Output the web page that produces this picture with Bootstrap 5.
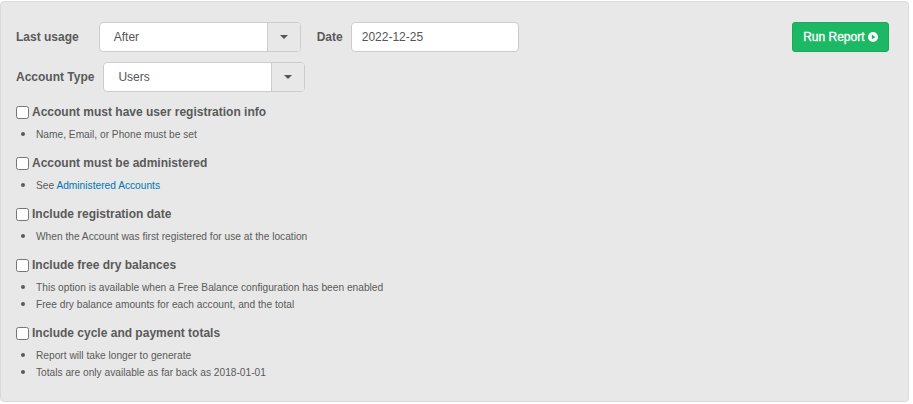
<!DOCTYPE html>
<html lang="en">
<head>
<meta charset="UTF-8" />
<meta name="viewport" content="width=device-width, initial-scale=1" />
<title>Report Options</title>
<link href="https://cdn.jsdelivr.net/npm/bootstrap@5.3.0/dist/css/bootstrap.min.css" rel="stylesheet" />
<style>
  body {
    background-color: #fff;
    font-family: "Liberation Sans", Arial, sans-serif;
    color: #555;
    padding: 1px 4px 0 0;
  }
  .report-panel {
    height: 401px;
    background-color: #e8e8e8;
    border: 1px solid #dadada;
    border-radius: 4px;
    padding: 20px 19px 0 15px;
  }
  .field-label {
    font-size: 12px;
    font-weight: 700;
    color: #5a5a5a;
    margin: 0;
  }
  .combo {
    display: flex;
    width: 202px;
    height: 30px;
    background: #fff;
    border: 1px solid #ccc;
    border-radius: 4px;
    font-size: 12px;
    color: #555;
  }
  .combo-a { margin-left: 20px; }
  .combo-b { margin-left: 9px; }
  .combo-value {
    flex-grow: 1;
    padding-left: 14px;
    line-height: 28px;
  }
  .combo-arrow {
    width: 33px;
    background: #e8e8e8;
    border-left: 1px solid #ccc;
    border-radius: 0 3px 3px 0;
    display: flex;
    align-items: center;
    justify-content: center;
  }
  .combo-arrow::after {
    content: "";
    border-top: 4px solid #555;
    border-left: 4px solid transparent;
    border-right: 4px solid transparent;
  }
  .date-label { margin: 0 8px 0 16px; }
  .type-row { margin: 10px 0 13px; }
  .date-box {
    width: 168px;
    height: 30px;
    font-size: 12px;
    color: #555;
    padding: 0 10px;
    border: 1px solid #ccc;
    border-radius: 4px;
  }
  .run-btn {
    width: 97px;
    height: 30px;
    padding: 0;
    font-size: 12px;
    color: #fff;
    -webkit-text-stroke: .3px #fff;
    background-color: #1cb864;
    border: 1px solid #18a95a;
    border-radius: 3px;
  }
  .run-btn:hover { color: #fff; background-color: #18a95a; }
  .run-btn svg { vertical-align: -1px; }
  .opt-check {
    width: 13px;
    height: 13px;
    margin: 0 3px 0 0;
    flex-shrink: 0;
    appearance: none;
    background: #fff;
    border: 1px solid #767676;
    border-radius: 2.5px;
  }
  .opt-title {
    font-size: 12px;
    font-weight: 700;
    line-height: 14px;
    color: #5a5a5a;
  }
  .opt-notes {
    font-size: 10.2px;
    line-height: 17px;
    color: #5a5a5a;
    margin: 6px 0 0;
    padding-left: 20px;
  }
  .opt-notes li { height: 17px; }
  .opt-notes li::marker { font-size: 14px; }
  .opt-notes a { color: #0077b3; text-decoration: none; }
  .opt-group { margin-bottom: 14px; }
</style>
</head>
<body>
  <div class="report-panel">
    <div class="d-flex align-items-center">
      <label class="field-label">Last usage</label>
      <div class="combo combo-a"><span class="combo-value">After</span><span class="combo-arrow"></span></div>
      <label class="field-label date-label">Date</label>
      <input type="text" class="date-box" value="2022-12-25" />
      <button class="btn run-btn ms-auto">Run Report <svg width="10" height="10" viewBox="0 0 10 10"><circle cx="5" cy="5" r="5" fill="#fff"/><path d="M3.8 2.6 7.4 5 3.8 7.4z" fill="#1cb864"/></svg></button>
    </div>
    <div class="d-flex align-items-center type-row">
      <label class="field-label">Account Type</label>
      <div class="combo combo-b"><span class="combo-value">Users</span><span class="combo-arrow"></span></div>
    </div>
    <div class="opt-group">
      <div class="d-flex align-items-center"><input type="checkbox" class="opt-check" /><span class="opt-title">Account must have user registration info</span></div>
      <ul class="opt-notes"><li>Name, Email, or Phone must be set</li></ul>
    </div>
    <div class="opt-group">
      <div class="d-flex align-items-center"><input type="checkbox" class="opt-check" /><span class="opt-title">Account must be administered</span></div>
      <ul class="opt-notes"><li>See <a href="#">Administered Accounts</a></li></ul>
    </div>
    <div class="opt-group">
      <div class="d-flex align-items-center"><input type="checkbox" class="opt-check" /><span class="opt-title">Include registration date</span></div>
      <ul class="opt-notes"><li>When the Account was first registered for use at the location</li></ul>
    </div>
    <div class="opt-group">
      <div class="d-flex align-items-center"><input type="checkbox" class="opt-check" /><span class="opt-title">Include free dry balances</span></div>
      <ul class="opt-notes"><li>This option is available when a Free Balance configuration has been enabled</li><li>Free dry balance amounts for each account, and the total</li></ul>
    </div>
    <div class="opt-group">
      <div class="d-flex align-items-center"><input type="checkbox" class="opt-check" /><span class="opt-title">Include cycle and payment totals</span></div>
      <ul class="opt-notes"><li>Report will take longer to generate</li><li>Totals are only available as far back as 2018-01-01</li></ul>
    </div>
  </div>
  <script src="https://cdn.jsdelivr.net/npm/bootstrap@5.3.0/dist/js/bootstrap.bundle.min.js"></script>
</body>
</html>
